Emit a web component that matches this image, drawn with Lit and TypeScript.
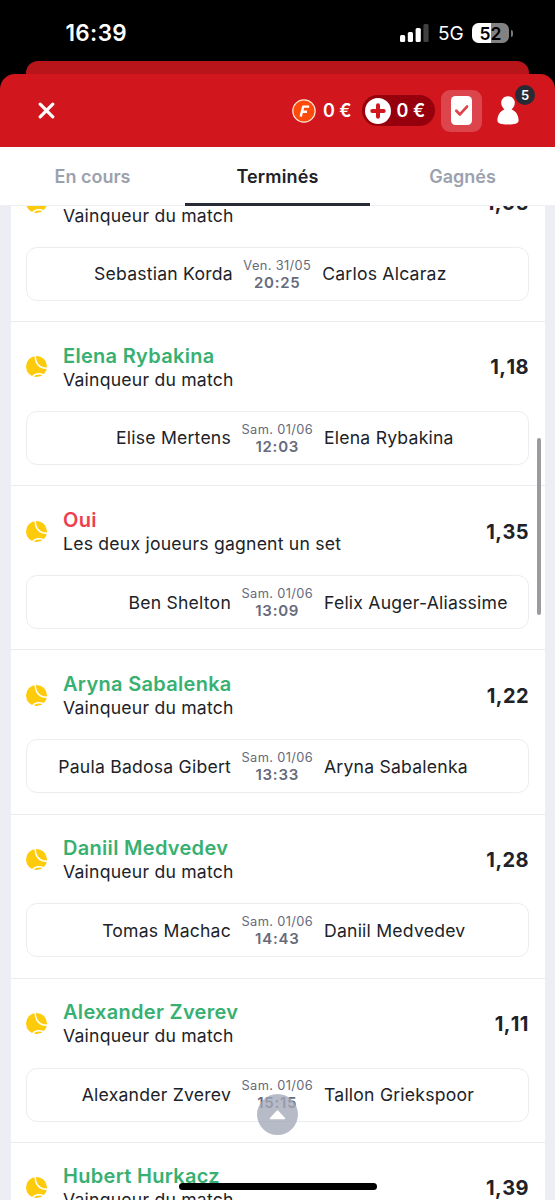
import { LitElement, html, css, svg } from "lit";
import { customElement, property } from "lit/decorators.js";

interface Bet {
  pick: string;
  market: string;
  won: boolean;
  odds: string;
  home: string;
  away: string;
  date: string;
  time: string;
}

const WINNER = "Vainqueur du match";

const BETS: Bet[] = [
  { pick: "Carlos Alcaraz", market: WINNER, won: true, odds: "1,05", home: "Sebastian Korda", away: "Carlos Alcaraz", date: "Ven. 31/05", time: "20:25" },
  { pick: "Elena Rybakina", market: WINNER, won: true, odds: "1,18", home: "Elise Mertens", away: "Elena Rybakina", date: "Sam. 01/06", time: "12:03" },
  { pick: "Oui", market: "Les deux joueurs gagnent un set", won: false, odds: "1,35", home: "Ben Shelton", away: "Felix Auger-Aliassime", date: "Sam. 01/06", time: "13:09" },
  { pick: "Aryna Sabalenka", market: WINNER, won: true, odds: "1,22", home: "Paula Badosa Gibert", away: "Aryna Sabalenka", date: "Sam. 01/06", time: "13:33" },
  { pick: "Daniil Medvedev", market: WINNER, won: true, odds: "1,28", home: "Tomas Machac", away: "Daniil Medvedev", date: "Sam. 01/06", time: "14:43" },
  { pick: "Alexander Zverev", market: WINNER, won: true, odds: "1,11", home: "Alexander Zverev", away: "Tallon Griekspoor", date: "Sam. 01/06", time: "15:15" },
  { pick: "Hubert Hurkacz", market: WINNER, won: true, odds: "1,39", home: "Hubert Hurkacz", away: "Denis Shapovalov", date: "Sam. 01/06", time: "15:40" },
];

@customElement("bet-row")
class BetRow extends LitElement {
  @property({ attribute: false }) bet!: Bet;

  static styles = css`
    :host {
      display: block;
      box-sizing: border-box;
      height: 164.15px;
      padding: 21.8px 16px 0 15.5px;
      border-bottom: 1px solid #ebecf0;
    }
    .head {
      display: grid;
      grid-template-columns: 37px 1fr auto;
      align-items: center;
      height: 47px;
    }
    .ball { display: block; width: 21px; height: 21px; margin-top: -1px; }
    .pick {
      padding-top: 0.6px;
      font-size: 20px;
      line-height: 23px;
      font-weight: 600;
      letter-spacing: 0.3px;
      color: #37b072;
    }
    .lost { color: #ee3e50; }
    .market { font-size: 17.6px; line-height: 23px; letter-spacing: 0.22px; color: #202228; }
    .odds {
      margin-right: -0.4px;
      font-size: 20px;
      line-height: 24px;
      font-weight: 700;
      font-kerning: none;
      letter-spacing: 0.4px;
      color: #202228;
    }
    .match {
      box-sizing: border-box;
      display: grid;
      grid-template-columns: 1fr auto 1fr;
      column-gap: 11px;
      align-items: center;
      height: 54px;
      margin-top: 20px;
      border: 1px solid #ecedf1;
      border-radius: 11px;
      white-space: nowrap;
      font-size: 17.6px;
      letter-spacing: 0.22px;
      color: #202228;
    }
    .home { text-align: right; margin-right: -0.5px; }
    .when { padding-top: 0.8px; text-align: center; color: #666a7b; }
    .date { font-size: 12.8px; line-height: 16px; letter-spacing: 0.37px; }
    .time { font-size: 15px; line-height: 17px; font-weight: 600; letter-spacing: 0.75px; }
  `;

  render() {
    const b = this.bet;
    return html`
      <div class="head">
        <svg class="ball" viewBox="0 0 21 21">
          <circle cx="10.5" cy="10.5" r="10.5" fill="#fdcb0a" />
          <path d="M9.2 -1C9.2 8 13.5 12.6 22 12.2M5.8 21.5C8 18.2 12.4 17 17.8 18.6" fill="none" stroke="#fff" stroke-width="1.5" />
        </svg>
        <div>
          <div class="pick ${b.won ? "" : "lost"}">${b.pick}</div>
          <div class="market">${b.market}</div>
        </div>
        <div class="odds">${b.odds}</div>
      </div>
      <div class="match">
        <div class="home">${b.home}</div>
        <div class="when">
          <div class="date">${b.date}</div>
          <div class="time">${b.time}</div>
        </div>
        <div class="away">${b.away}</div>
      </div>
    `;
  }
}

@customElement("app-root")
class AppRoot extends LitElement {
  static styles = css`
    :host {
      display: flex;
      flex-direction: column;
      position: relative;
      width: 555px;
      height: 1200px;
      overflow: hidden;
      background: #000;
      font-family: Inter, "Liberation Sans", sans-serif;
    }
    .status {
      display: flex;
      align-items: center;
      box-sizing: border-box;
      height: 61px;
      padding: 5px 42.5px 0 65.5px;
      color: #fff;
    }
    .clock { flex: 1; font-size: 22.5px; font-weight: 600; line-height: 56px; letter-spacing: 0.35px; }
    .signal { width: 29px; height: 19px; margin: -1px 9px 0 0; }
    .net { font-size: 19px; width: 34px; }
    .battery {
      display: flex;
      align-items: center;
      justify-content: center;
      width: 37px;
      height: 20px;
      border-radius: 6.5px;
      background: linear-gradient(90deg, #fff 52%, #828282 52%);
      color: #000;
      font-size: 17.5px;
      font-weight: 600;
    }
    .cap { width: 2px; height: 7px; margin-left: 1.5px; border-radius: 0 2px 2px 0; background: #777; }
    .behind { height: 13px; margin: 0 26px; border-radius: 12px 12px 0 0; background: #b71519; }
    .bar {
      display: flex;
      align-items: center;
      box-sizing: border-box;
      height: 73px;
      padding: 0 35px 0 38.3px;
      border-radius: 15px 15px 0 0;
      background: #d1171d;
      color: #fff;
      font-size: 18px;
      font-weight: 600;
    }
    .close { width: 17px; height: 17px; margin-right: 237.2px; }
    .coin { width: 24px; height: 24px; margin-right: 6.5px; }
    .free { width: 39.5px; white-space: nowrap; }
    .wallet {
      display: flex;
      align-items: center;
      box-sizing: border-box;
      width: 73px;
      height: 31px;
      padding-left: 2.5px;
      gap: 5.8px;
      border-radius: 16px;
      background: #96000d;
      white-space: nowrap;
    }
    .plus { flex: none; width: 26px; height: 26px; }
    .tickets {
      display: flex;
      align-items: center;
      justify-content: center;
      width: 41px;
      height: 42px;
      margin: 0 16px 0 6px;
      border-radius: 9px;
      background: #dc454b;
    }
    .card { width: 21px; height: 29px; }
    .profile { position: relative; width: 22px; height: 29px; }
    .person { display: block; width: 22px; height: 29px; margin-left: -0.7px; }
    .count {
      position: absolute;
      left: 16.7px;
      top: -11.5px;
      width: 20.5px;
      height: 20.5px;
      border-radius: 50%;
      background: #282b34;
      font-size: 13px;
      line-height: 21px;
      text-align: center;
    }
    .tabs {
      display: grid;
      grid-template-columns: repeat(3, 1fr);
      flex: none;
      height: 59px;
      box-sizing: border-box;
      background: #fff;
      border-bottom: 1px solid #eeeff3;
    }
    .tab {
      box-sizing: border-box;
      height: 59px;
      text-align: center;
      font-size: 18px;
      font-weight: 600;
      line-height: 59px;
      color: #9ca1ae;
    }
    .active { color: #202228; letter-spacing: 0.15px; border-bottom: 3px solid #282b34; }
    .scroller { flex: 1; min-height: 0; overflow: hidden; padding: 0 10.5px; background: #edeef3; }
    .list { margin-top: -48px; background: #fff; }
    .thumb {
      position: absolute;
      left: 537px;
      top: 438px;
      width: 4px;
      height: 177px;
      border-radius: 2px;
      background: #9b9b9d;
    }
    .top { position: absolute; left: 257px; top: 1094px; width: 41px; height: 41px; }
    .homebar {
      position: absolute;
      left: 179px;
      top: 1183px;
      width: 198px;
      height: 6.5px;
      border-radius: 4px;
      background: #000;
    }
  `;

  render() {
    const bars = [[0, 12, 7], [7.8, 9, 10], [15.6, 5, 14], [23.4, 1, 18]];
    return html`
      <div class="status">
        <div class="clock">16:39</div>
        <svg class="signal" viewBox="0 0 29 19">
          ${bars.map(([x, y, h], i) => svg`<rect x=${x} y=${y} width="5.2" height=${h} rx="1.5" fill=${i < 3 ? "#fff" : "#404040"} />`)}
        </svg>
        <div class="net">5G</div>
        <div class="battery">52</div>
        <div class="cap"></div>
      </div>
      <div class="behind"></div>
      <div class="bar">
        <svg class="close" viewBox="0 0 17 17">
          <path d="M2.2 2.2L14.8 14.8M14.8 2.2L2.2 14.8" stroke="#fff" stroke-width="3.2" stroke-linecap="round" />
        </svg>
        <svg class="coin" viewBox="0 0 24 24">
          <circle cx="12" cy="12" r="11.2" fill="#ff4b0a" stroke="#ffe8dc" stroke-width="1.2" />
          <path d="M8.7 17.6L11.2 7.6H17.2M10 12.7H15" fill="none" stroke="#fff" stroke-width="2.4" stroke-linejoin="round" />
        </svg>
        <div class="free">0 €</div>
        <div class="wallet">
          <svg class="plus" viewBox="0 0 26 26">
            <circle cx="13" cy="13" r="13" fill="#fff" />
            <path d="M13 7.300V18.700M7.300 13H18.700" stroke="#d1171d" stroke-width="4" stroke-linecap="round" />
          </svg>
          <span>0 €</span>
        </div>
        <div class="tickets">
          <svg class="card" viewBox="0 0 21 29">
            <rect width="21" height="29" rx="4.5" fill="#fff" />
            <path d="M5.3 14.8L8.9 18.4L16 10.6" fill="none" stroke="#dc454b" stroke-width="2.8" stroke-linecap="round" stroke-linejoin="round" />
          </svg>
        </div>
        <div class="profile">
          <svg class="person" viewBox="0 0 22 29">
            <path d="M11 0.3C15 0.3 17.8 3.2 17.8 7C17.8 9.6 16.3 11.8 14.6 13.4C19 15 21.6 19.4 21.6 24.4C21.6 27.4 17.5 28.4 11 28.4C4.5 28.4 0.4 27.4 0.4 24.4C0.4 19.4 3 15 7.4 13.4C5.7 11.8 4.2 9.6 4.2 7C4.2 3.2 7 0.3 11 0.3Z" fill="#fff" />
          </svg>
          <div class="count">5</div>
        </div>
      </div>
      <div class="tabs">
        <div class="tab">En cours</div>
        <div class="tab active">Terminés</div>
        <div class="tab">Gagnés</div>
      </div>
      <div class="scroller">
        <div class="list">${BETS.map((b) => html`<bet-row .bet=${b}></bet-row>`)}</div>
      </div>
      <div class="thumb"></div>
      <svg class="top" viewBox="0 0 41 41">
        <circle cx="20.5" cy="20.5" r="20.5" fill="#a3a8b7" fill-opacity="0.78" />
        <path d="M13.5 24.5L20.5 17L27.5 24.5Z" fill="#fff" stroke="#fff" stroke-width="1.5" stroke-linejoin="round" />
      </svg>
      <div class="homebar"></div>
    `;
  }
}
